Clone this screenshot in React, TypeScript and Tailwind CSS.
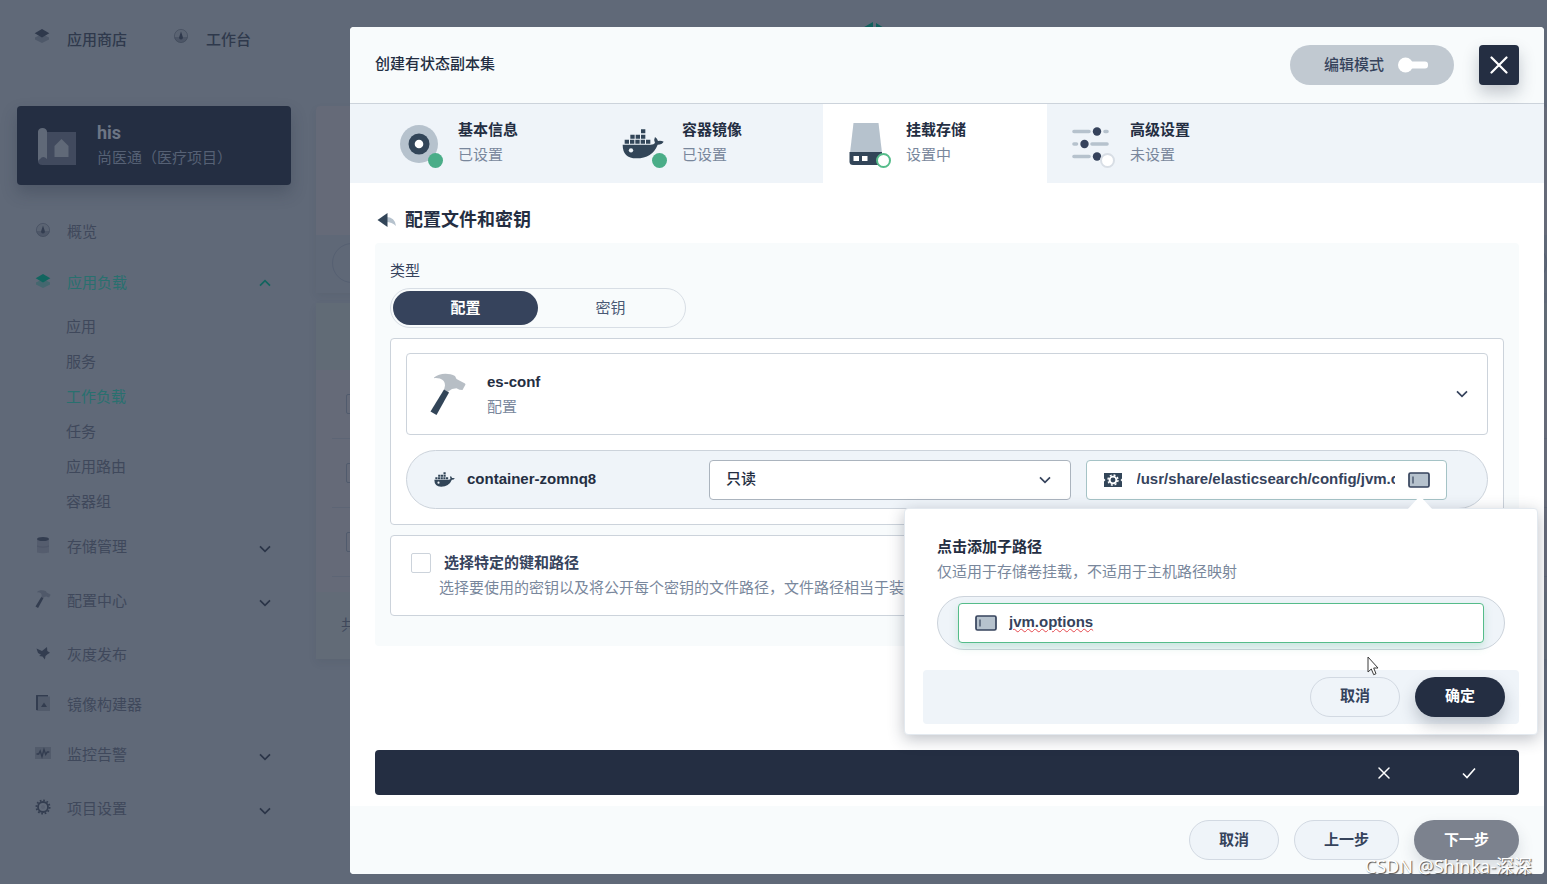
import { useState, type ReactNode } from "react";

type IconProps = { className?: string };

const Layers = ({ className = "" }: IconProps) => (
  <svg viewBox="0 0 16 16" className={`h-4 w-4 ${className}`} fill="currentColor" aria-hidden="true">
    <path d="M1 9.500 8 6l7 3.500v2L8 15l-7-3.500z" opacity="0.35" />
    <path d="M8 1 15.300 5.200 8 9.600.7 5.200z" />
  </svg>
);

const Gauge = ({ className = "" }: IconProps) => (
  <svg viewBox="0 0 16 16" className={`h-4 w-4 ${className}`} aria-hidden="true">
    <circle cx="8" cy="8" r="6.600" fill="currentColor" fillOpacity="0.1" stroke="currentColor" strokeOpacity="0.4" />
    <path d="M1.500 9h13A6.600 6.600 0 0 1 1.500 9z" fill="currentColor" opacity="0.3" />
    <path d="M8 3.500 9.800 9a1.900 1.900 0 1 1-3.600 0z" fill="currentColor" />
  </svg>
);

const Database = ({ className = "" }: IconProps) => (
  <svg viewBox="0 0 16 18" className={`h-[18px] w-4 ${className}`} fill="currentColor" aria-hidden="true">
    <path d="M2 3v13.500q6 1.500 12 0V3z" opacity="0.25" />
    <path d="M2 9.500q6 2 12 0v1.300q-6 2-12 0z" opacity="0.2" />
    <ellipse cx="8" cy="3" rx="6" ry="2" />
  </svg>
);

const Hammer = ({ className = "" }: IconProps) => (
  <svg viewBox="0 0 36 42" className={className} aria-hidden="true">
    <path d="M4 4.500C9-.2 19-.5 25 3l1.500 3 8.500 4.500.5 1-3 5.500-3-.2-3-1.500-4.500.7L17.500 19 14 17l1-4.500C15 7.500 11 4.500 4 5.200z" fill="currentColor" opacity="0.35" />
    <path d="m14 16.500 5 3L6.500 42 .5 38.500z" fill="currentColor" />
  </svg>
);

const Bird = ({ className = "" }: IconProps) => (
  <svg viewBox="0 0 16 16" className={`h-4 w-4 ${className}`} fill="currentColor" aria-hidden="true">
    <path d="M1.500 3.500 7 6l5-4 .3 4L15 7.800l-2.500 1.400L10.500 11l-.6 3.500-2.400-3L4 11l2-1.200L3 8z" />
  </svg>
);

const ImageFile = ({ className = "" }: IconProps) => (
  <svg viewBox="0 0 16 18" className={`h-[18px] w-4 ${className}`} fill="currentColor" aria-hidden="true">
    <path d="M3 2.500h12V17H3z" opacity="0.3" />
    <path d="M1 16V1.500Q1 1 1.500 1H13v1.400H3V16.500z" />
    <path d="m9 8.500 3 4.500H6z" />
  </svg>
);

const Pulse = ({ className = "" }: IconProps) => (
  <svg viewBox="0 0 16 14" className={`h-[14px] w-4 ${className}`} aria-hidden="true">
    <path d="M0 1h16v12H0z" fill="currentColor" opacity="0.3" />
    <path d="M1.500 8h2.200l1.500-3 1.800 5.500 2-7 1.700 5L12.300 6h2" fill="none" stroke="currentColor" strokeWidth="1.400" />
  </svg>
);

const Cog = ({ className = "" }: IconProps) => (
  <svg viewBox="0 0 16 16" className={`h-4 w-4 ${className}`} fill="none" stroke="currentColor" aria-hidden="true">
    <circle cx="8" cy="8" r="6.600" strokeWidth="1.800" strokeDasharray="1.700 1.756" />
    <circle cx="8" cy="8" r="5" strokeWidth="1.800" />
    <circle cx="8" cy="8" r="2" fill="currentColor" stroke="none" opacity="0.15" />
  </svg>
);

const Chevron = ({ up = false, className = "" }: IconProps & { up?: boolean }) => (
  <svg viewBox="0 0 12 8" className={`h-2 w-3 ${className}`} fill="none" stroke="currentColor" strokeWidth="1.700" aria-hidden="true">
    <path d={up ? "m1 6.700 5-5 5 5" : "m1 1.300 5 5 5-5"} />
  </svg>
);

const Project = () => (
  <svg viewBox="0 0 40 40" className="h-10 w-10" aria-hidden="true">
    <path d="M1 10 5 6h34v33H5.500Q1 39 1 35z" fill="#414a5e" />
    <path d="M1 5.500Q1.500 2 5.500 2T10 5.500V33Q6 29 3 33q-2 1-2 3z" fill="#606978" />
    <path d="M24.500 13 31.500 20v11h-14V20z" fill="#606978" />
  </svg>
);

const Docker = ({ className = "" }: IconProps) => (
  <svg viewBox="0 0 126 90" className={className} fill="#324558" aria-hidden="true">
    <path d="M57 1h13v12H57zM25 17h13v12H25zM41 17h13v12H41zM57 17h13v12H57zM8 32h13v12H8zM24 32h13v12H24zM40 32h13v12H40zM56 32h13v12H56zM72 32h13v12H72z" />
    <path d="M2 47h84q10 0 13-5-5-9 0-18 7 4 9 12 9-2 17 2-5 9-18 9Q91 88 43 88 2 88 2 47z" />
    <circle cx="27" cy="64" r="6.500" fill="#eff4f9" />
  </svg>
);

const Disc = () => (
  <svg viewBox="0 0 40 40" className="h-10 w-10" aria-hidden="true">
    <circle cx="20" cy="20" r="19" fill="#b6c2cd" />
    <circle cx="20" cy="20" r="10.500" fill="#324558" />
    <circle cx="20" cy="20" r="4.300" fill="#fff" />
  </svg>
);

const Drive = () => (
  <svg viewBox="0 0 40 44" className="h-11 w-10" aria-hidden="true">
    <path d="M6.500 1h25L35 31H3z" fill="#b6c2cd" />
    <path d="M2.500 30H35v13H6q-3.500 0-3.500-3.500z" fill="#324558" />
    <path d="M6.500 34h5.500v5H6.500zM15 34h5.500v5H15z" fill="#fff" />
  </svg>
);

const Sliders = () => (
  <svg viewBox="0 0 40 40" className="h-10 w-10" aria-hidden="true">
    <g stroke="#b6c2cd" strokeWidth="3.600" strokeLinecap="round">
      <path d="M3 7.500h15M34 7.500h2M3 20h2.500M21 20h15M3 32.500h15M34 32.500h2" />
    </g>
    <g fill="#36435c">
      <circle cx="26" cy="7.500" r="4.200" />
      <circle cx="13.500" cy="20" r="4.200" />
      <circle cx="26" cy="32.500" r="4.200" />
    </g>
  </svg>
);

const BackArrow = () => (
  <svg viewBox="0 0 20 16" className="h-4 w-5" aria-hidden="true">
    <path d="M9 5q9 0 10 9-4-4-10-4z" fill="#b6c2cd" />
    <path d="M10.500 1v14L.5 8z" fill="#324558" />
  </svg>
);

const MountIcon = () => (
  <svg viewBox="0 0 20 18" className="h-[18px] w-5 shrink-0" aria-hidden="true">
    <path d="M1 2h18v5.500l-1.500 1.500 1.500 1.500V16H1v-5.500L2.500 9 1 7.500z" fill="#324558" />
    <circle cx="10" cy="9" r="5" fill="none" stroke="#fff" strokeWidth="1.400" strokeDasharray="2 1.927" />
    <circle cx="10" cy="9" r="3.400" fill="none" stroke="#fff" strokeWidth="1.900" />
  </svg>
);

const SubPathIcon = () => (
  <svg viewBox="0 0 22 16" className="h-4 w-[22px] shrink-0" aria-hidden="true">
    <rect x="1" y="1" width="20" height="14" rx="1.500" fill="#b6c2cd" stroke="#36435c" strokeWidth="1.700" />
    <path d="M5 4.500v7" stroke="#36435c" strokeWidth="1.200" />
  </svg>
);

const Cross = ({ className = "" }: IconProps) => (
  <svg viewBox="0 0 18 18" className={className} fill="none" stroke="currentColor" strokeLinecap="round" strokeWidth="2.200" aria-hidden="true">
    <path d="m1.500 1.500 15 15m0-15-15 15" />
  </svg>
);

const Tick = () => (
  <svg viewBox="0 0 14 12" className="h-3 w-[14px]" fill="none" stroke="currentColor" strokeWidth="1.600" aria-hidden="true">
    <path d="m1 6.500 4 4 8-9" />
  </svg>
);

type MenuItem = { label: string; icon: ReactNode; expandable?: boolean; children?: string[] };

const menu: MenuItem[] = [
  { label: "概览", icon: <Gauge /> },
  {
    label: "应用负载",
    icon: <Layers />,
    expandable: true,
    children: ["应用", "服务", "工作负载", "任务", "应用路由", "容器组"],
  },
  { label: "存储管理", icon: <Database />, expandable: true },
  { label: "配置中心", icon: <Hammer className="h-[18px] w-4" />, expandable: true },
  { label: "灰度发布", icon: <Bird /> },
  { label: "镜像构建器", icon: <ImageFile /> },
  { label: "监控告警", icon: <Pulse />, expandable: true },
  { label: "项目设置", icon: <Cog />, expandable: true },
];

const Sidebar = () => (
  <aside className="w-[274px] shrink-0">
    <button
      type="button"
      className="flex h-[79px] w-full items-center gap-5 rounded-[4px] bg-[#242e42] pl-5 text-left shadow-[0_8px_16px_rgba(36,46,66,0.28)]"
    >
      <Project />
      <span className="flex flex-col">
        <span className="font-['Roboto'] text-lg font-bold leading-6 text-[#6d7685]">his</span>
        <span className="text-[15px] leading-[26px] text-[#566175]">尚医通（医疗项目）</span>
      </span>
    </button>
    <nav className="mt-[22px] text-[15px] text-[#3f485b]">
      {menu.map((item) => (
        <div key={item.label}>
          <a
            href="#"
            className={`flex items-center pl-[18px] pr-5 ${item.children ? "h-[52px] text-[#29706f]" : item.expandable ? "h-[54px]" : "h-[50px]"}`}
          >
            <span className={`flex flex-1 items-center gap-4 ${item.expandable && !item.children ? "pb-1" : ""}`}>
              <span className={item.children ? "pb-1 text-[#12655f]" : "pb-1 text-[#333d50]"}>{item.icon}</span>
              {item.label}
            </span>
            {item.expandable && <Chevron up={!!item.children} className={item.children ? "text-[#12655f]" : "text-[#2b3548]"} />}
          </a>
          {item.children && (
            <ul className="pb-[3px] pl-[49px]">
              {item.children.map((child) => (
                <li key={child} className="h-[35px] leading-[35px]">
                  <a href="#" className={child === "工作负载" ? "text-[#29706f]" : ""}>
                    {child}
                  </a>
                </li>
              ))}
            </ul>
          )}
        </div>
      ))}
    </nav>
  </aside>
);

const BackgroundTable = () => (
  <main className="flex flex-1 flex-col gap-[10px]">
    <section className="rounded-[4px] bg-[#656a78] shadow-[0_4px_8px_rgba(36,46,66,0.08)]">
      <div className="h-[129px]" />
      <div className="h-[58px] bg-[#5f6877] pl-4 pt-2">
        <div className="h-10 rounded-full border border-[#566072]" />
      </div>
    </section>
    <section className="rounded-[4px] bg-[#656a78] shadow-[0_4px_8px_rgba(36,46,66,0.08)]">
      <div className="h-[67px] bg-[#616b76]" />
      <div className="flex flex-col pl-4">
        {[0, 1, 2].map((row) => (
          <div key={row} className="flex h-[69px] items-center border-b border-[#5d6575] pl-[14px]">
            <span className="h-5 w-5 rounded-[2px] border border-[#515b6d]" />
          </div>
        ))}
      </div>
      <div className="mt-[15px] flex h-[67px] items-center bg-[#626b77] pl-[25px] text-[15px] text-[#3f485b]">共 3 条</div>
    </section>
  </main>
);

const steps = [
  { title: "基本信息", status: "已设置", state: "done", icon: <Disc /> },
  { title: "容器镜像", status: "已设置", state: "done", icon: <Docker className="h-[30px] w-[42px]" /> },
  { title: "挂载存储", status: "设置中", state: "current", icon: <Drive /> },
  { title: "高级设置", status: "未设置", state: "todo", icon: <Sliders /> },
];

const badge: Record<string, string> = {
  done: "bg-[#4aad88]",
  current: "border-2 border-[#55bc8a] bg-white",
  todo: "border-2 border-[#d8dee5] bg-white",
};

const PillButton = ({ children, className }: { children: ReactNode; className: string }) => (
  <button type="button" className={`h-10 rounded-full text-[15px] font-bold ${className}`}>
    {children}
  </button>
);

const light = "border border-[#d2d9e2] bg-[#eff4f9] text-[#36435c]";

const SubPathPopover = () => {
  const [path, setPath] = useState("jvm.options");
  return (
    <div
      role="dialog"
      aria-label="点击添加子路径"
      className="absolute right-[-91px] top-[48px] z-10 w-[634px] rounded-[4px] border border-[#e3e9ef] bg-white px-[18px] pb-[10px] pt-7 shadow-[0_4px_16px_rgba(36,46,66,0.3)]"
    >
      <svg viewBox="0 0 26 14" className="absolute right-[104px] top-[-13px] h-[14px] w-[26px]" aria-hidden="true">
        <path d="M0 14 11 2q2-2 4 0l11 12z" fill="#fff" />
      </svg>
      <div className="px-[14px]">
        <label htmlFor="sub-path" className="block text-[15px] font-bold leading-5 text-[#242e42]">
          点击添加子路径
        </label>
        <p className="mt-[5px] text-[15px] leading-5 text-[#79879c]">仅适用于存储卷挂载，不适用于主机路径映射</p>
        <div className="mt-[14px] rounded-full border border-[#ccd3db] bg-[#eff4f9] px-5 py-[6px]">
          <div className="flex h-10 items-center gap-3 rounded-[4px] border border-[#55bc8a] bg-white px-4 shadow-[0_4px_8px_rgba(85,188,138,0.25)]">
            <SubPathIcon />
            <input
              id="sub-path"
              type="text"
              value={path}
              onChange={(e) => setPath(e.target.value)}
              className="min-w-0 flex-1 bg-transparent text-[15px] font-bold text-[#36435c] underline decoration-[#e5484d] decoration-wavy decoration-1 underline-offset-1 outline-none"
            />
          </div>
        </div>
      </div>
      <div className="mt-5 flex h-[54px] items-center justify-end gap-[15px] rounded-[4px] bg-[#eff4f9] pr-[14px]">
        <PillButton className={`w-[90px] ${light}`}>取消</PillButton>
        <PillButton className="w-[90px] bg-[#242e42] text-white shadow-[0_8px_16px_rgba(36,46,66,0.25)]">确定</PillButton>
      </div>
      <svg viewBox="0 0 12 20" className="absolute bottom-[58px] right-[158px] h-5 w-3" aria-hidden="true">
        <path d="M1 1v15l3.300-3 2.400 5.700 2.300-1L6.700 12H11z" fill="#fff" stroke="#3a3a3a" />
      </svg>
    </div>
  );
};

const MountRow = () => {
  const [mode, setMode] = useState("ro");
  const [path, setPath] = useState("/usr/share/elasticsearch/config/jvm.options");
  return (
    <div className="mt-[15px] grid h-[59px] grid-cols-[260px_1fr_1fr] items-center gap-x-[15px] rounded-full border border-[#ccd3db] bg-[#eff4f9] pl-[27px] pr-10">
      <div className="flex items-center gap-3 text-[15px] font-bold text-[#242e42]">
        <Docker className="h-[15px] w-[21px]" />
        container-zomnq8
      </div>
      <div className="relative">
        <select
          aria-label="读写权限"
          value={mode}
          onChange={(e) => setMode(e.target.value)}
          className="h-10 w-full appearance-none rounded-[4px] border border-[#abb4be] bg-white px-4 text-[15px] font-medium text-[#242e42] outline-none"
        >
          <option value="ro">只读</option>
          <option value="rw">读写</option>
        </select>
        <Chevron className="pointer-events-none absolute right-5 top-4 text-[#36435c]" />
      </div>
      <div className="relative">
        <div className="flex h-10 items-center rounded-[4px] border border-[#a5c3c6] bg-white px-4">
          <MountIcon />
          <input
            type="text"
            aria-label="挂载路径"
            value={path}
            onChange={(e) => setPath(e.target.value)}
            className="ml-[14px] mr-[13px] min-w-0 flex-1 bg-transparent text-[15px] font-bold text-[#36435c] outline-none"
          />
          <button type="button" aria-label="子路径">
            <SubPathIcon />
          </button>
        </div>
        <SubPathPopover />
      </div>
    </div>
  );
};

const Modal = () => (
  <div role="dialog" aria-label="创建有状态副本集" className="flex flex-1 flex-col rounded-[4px] bg-white">
    <header className="flex h-[77px] items-center border-b border-[#ccd3db] rounded-t-[4px] bg-[#f8fbfc] px-[25px]">
      <h1 className="flex-1 pb-[2px] text-[15px] font-medium text-[#242e42]">创建有状态副本集</h1>
      <button
        type="button"
        role="switch"
        aria-checked="false"
        className="flex h-10 w-[164px] items-center justify-center gap-[14px] rounded-full bg-[#c1c9d1] pl-2 text-[15px] font-medium text-[#36435c]"
      >
        编辑模式
        <svg viewBox="0 0 30 16" className="h-4 w-[30px]" fill="#fff" aria-hidden="true">
          <circle cx="7.500" cy="8" r="7.500" />
          <rect x="8" y="4.500" width="22" height="7" rx="3" />
        </svg>
      </button>
      <button
        type="button"
        aria-label="关闭"
        className="ml-[25px] flex h-10 w-10 items-center justify-center rounded-[4px] bg-[#242e42] text-white shadow-[0_8px_16px_rgba(36,46,66,0.25)]"
      >
        <Cross className="h-[18px] w-[18px]" />
      </button>
    </header>

    <div className="flex h-[79px] bg-[#eff4f9] pl-[25px]">
      {steps.map((step) => (
        <button
          key={step.title}
          type="button"
          className={`flex w-[224px] items-center gap-[19px] pl-6 text-left ${step.state === "current" ? "bg-white" : ""}`}
        >
          <span className="relative flex h-10 w-10 items-center justify-center">
            <span className="flex shrink-0">{step.icon}</span>
            <span className={`absolute -bottom-1 -right-1 h-[15px] w-[15px] rounded-full ${badge[step.state]}`} />
          </span>
          <span className="flex flex-col gap-[5px] pb-[2px] text-[15px] leading-5">
            <span className="font-bold text-[#242e42]">{step.title}</span>
            <span className="text-[#79879c]">{step.status}</span>
          </span>
        </button>
      ))}
    </div>

    <div className="flex flex-1 flex-col px-[25px] pb-[11px] pt-[25px]">
      <h2 className="flex items-center gap-2 pl-[2px] text-lg font-bold leading-6 text-[#242e42]">
        <button type="button" aria-label="返回">
          <BackArrow />
        </button>
        配置文件和密钥
      </h2>
      <section className="mt-[11px] rounded-[4px] bg-[#f8fbfc] px-[15px] pb-[30px] pt-4">
        <div className="text-[15px] leading-6 text-[#36435c]">类型</div>
        <div className="mt-[5px] flex h-10 w-[296px] rounded-full border border-[#d8dee5] p-[2px] text-[15px]">
          <button type="button" className="flex-1 rounded-full bg-[#36435c] font-bold text-white">
            配置
          </button>
          <button type="button" className="flex-1 rounded-full text-[#4a5974]">
            密钥
          </button>
        </div>

        <div className="mt-[10px] rounded-[4px] border border-[#ccd3db] bg-white px-[15px] pb-[15px] pt-[14px]">
          <button
            type="button"
            className="flex h-[82px] w-full items-center rounded-[4px] border border-[#ccd3db] pl-[23px] pr-[19px] text-left"
          >
            <Hammer className="h-[42px] w-9 text-[#324558]" />
            <span className="ml-[21px] flex flex-1 flex-col gap-[5px] text-[15px] leading-5">
              <span className="font-bold text-[#242e42]">es-conf</span>
              <span className="text-[#79879c]">配置</span>
            </span>
            <Chevron className="text-[#36435c]" />
          </button>
          <MountRow />
        </div>

        <div className="mt-[10px] flex gap-2 rounded-[4px] border border-[#ccd3db] bg-white px-5 pb-[17px] pt-[17px]">
          <input
            id="specific-keys"
            type="checkbox"
            className="h-5 w-5 appearance-none rounded-[2px] border border-[#ccd3db] bg-white"
          />
          <div className="text-[15px] leading-5">
            <label htmlFor="specific-keys" className="block pl-[5px] font-bold text-[#36435c]">
              选择特定的键和路径
            </label>
            <p className="mt-[5px] text-[#79879c]">选择要使用的密钥以及将公开每个密钥的文件路径，文件路径相当于装载路径</p>
          </div>
        </div>
      </section>

      <div className="mt-auto flex h-[45px] items-center justify-end gap-[72px] rounded-[4px] bg-[#242e42] pr-[43px] text-white">
        <button type="button" aria-label="取消编辑">
          <Cross className="h-3 w-3" />
        </button>
        <button type="button" aria-label="确认编辑">
          <Tick />
        </button>
      </div>
    </div>

    <footer className="flex h-[68px] items-center justify-end gap-[15px] rounded-b-[4px] bg-[#f8fbfc] px-[25px]">
      <PillButton className={`w-[90px] ${light}`}>取消</PillButton>
      <PillButton className={`w-[105px] ${light}`}>上一步</PillButton>
      <PillButton className="w-[105px] bg-[#7c828e] text-white shadow-[0_8px_16px_rgba(36,46,66,0.15)]">下一步</PillButton>
    </footer>
  </div>
);

export default function App() {
  return (
    <div className="relative min-h-screen overflow-hidden bg-[#606978] font-['Liberation_Sans','Noto_Sans_CJK_SC',sans-serif]">
      <header className="relative flex h-20 items-center gap-[46px] pl-[34px] text-[15px] font-medium text-[#2f394c]">
        <a href="#" className="flex items-center gap-[17px]">
          <Layers className="mb-2" />
          应用商店
        </a>
        <a href="#" className="flex items-center gap-[17px]">
          <Gauge className="mb-2" />
          工作台
        </a>
        <svg viewBox="0 0 36 36" className="absolute left-[56.500%] top-[21px] h-9 w-9 -translate-x-1/2" fill="#10605c" aria-hidden="true">
          <path d="M17 1v34L3 27V9zM20 2l13 8v16l-13 8z" />
        </svg>
      </header>
      <div className="flex gap-[25px] pl-[17px] pt-[26px]">
        <Sidebar />
        <BackgroundTable />
      </div>

      <div className="absolute inset-0 flex pb-[10px] pl-[350px] pr-[3px] pt-[27px]">
        <Modal />
      </div>

      <div className="pointer-events-none absolute bottom-[4px] right-[15px] font-['Noto_Sans','Noto_Sans_CJK_SC',sans-serif] text-lg leading-7 text-white [text-shadow:1px_1px_1px_rgba(60,60,60,0.9)]">
        CSDN @Shinka-深深
      </div>
    </div>
  );
}
